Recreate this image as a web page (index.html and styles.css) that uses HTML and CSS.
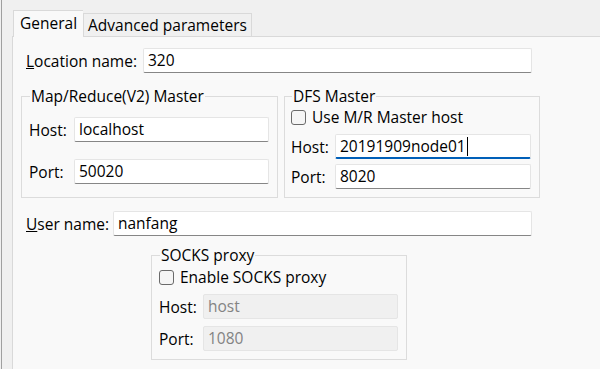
FILE: index.html
```html
<!DOCTYPE html>
<html lang="en">
<head>
    <meta charset="UTF-8">
    <title>Hadoop location</title>
    <link rel="stylesheet" href="styles.css">
</head>
<body>
    <div class="window">
        <div class="edge"></div>
        <div class="main">
            <!-- Tabs -->
            <div class="tabs">
                <div class="tab active">General</div>
                <div class="tab">Advanced parameters</div>
            </div>

            <div class="pane">
                <div class="row location-row">
                    <label class="row-label"><u>L</u>ocation name:</label>
                    <div class="field">320</div>
                </div>

                <div class="groups">
                    <fieldset class="group mr-group">
                        <legend>Map/Reduce(V2) Master</legend>
                        <div class="grid">
                            <label>Host:</label>
                            <div class="field">localhost</div>
                            <label>Port:</label>
                            <div class="field">50020</div>
                        </div>
                    </fieldset>

                    <fieldset class="group dfs-group">
                        <legend>DFS Master</legend>
                        <div class="check">
                            <span class="box"></span>
                            Use M/R Master host
                        </div>
                        <div class="grid tight">
                            <label>Host:</label>
                            <div class="field focused">20191909node01<span class="caret"></span></div>
                            <label>Port:</label>
                            <div class="field">8020</div>
                        </div>
                    </fieldset>
                </div>

                <div class="row user-row">
                    <label class="row-label"><u>U</u>ser name:</label>
                    <div class="field">nanfang</div>
                </div>

                <fieldset class="group socks-group">
                    <legend>SOCKS proxy</legend>
                    <div class="check">
                        <span class="box"></span>
                        Enable SOCKS proxy
                    </div>
                    <div class="grid tight">
                        <label>Host:</label>
                        <div class="field disabled">host</div>
                        <label>Port:</label>
                        <div class="field disabled">1080</div>
                    </div>
                </fieldset>
            </div>
        </div>
    </div>
</body>
</html>
```

FILE: styles.css
```css
* {
    margin: 0;
    padding: 0;
    box-sizing: border-box;
}

body {
    font-family: "Open Sans", "Noto Sans", sans-serif;
    font-size: 15.5px;
    color: #000;
    background-color: #f0f0f0;
    width: 600px;
    height: 369px;
    overflow: hidden;
}

.window {
    display: flex;
    height: 369px;
}

.edge {
    width: 2px;
    border-left: 1px solid #f0f0f0;
    background-color: #a0a0a0;
}

.main {
    flex: 1;
    display: flex;
    flex-direction: column;
    padding-left: 10px;
}

/* Tabs */
.tabs {
    display: flex;
    align-items: flex-end;
    height: 36px;
    padding-left: 1px;
}

.tab {
    height: 24px;
    padding: 0 4px 0 4px;
    border: 1px solid #d9d9d9;
    border-bottom: none;
    background-color: #f0f0f0;
    line-height: 22px;
    margin-bottom: -1px;
}

.tab.active {
    height: 27px;
    padding: 0 6px;
    background-color: #f9f9f9;
    border-right: none;
    position: relative;
    z-index: 1;
    line-height: 24px;
}

.pane {
    flex: 1;
    background-color: #f9f9f9;
    border-top: 1px solid #d9d9d9;
    border-left: 1px solid #d9d9d9;
    padding: 11px 0 0 8px;
}

/* Rows */
.row {
    display: flex;
    align-items: center;
    padding-left: 5px;
}

.row-label {
    flex: none;
}

.location-row .row-label {
    width: 117px;
}

.location-row .field {
    width: 389px;
}

.user-row {
    margin-top: 13px;
}

.user-row .row-label {
    width: 87px;
}

.user-row .field {
    width: 419px;
}

/* Text fields */
.field {
    height: 25px;
    padding-left: 4px;
    line-height: 23px;
    background-color: #fff;
    border: 1px solid #e5e5e5;
    border-bottom-color: #868686;
    border-radius: 2px;
    white-space: nowrap;
}

.field.focused {
    border-bottom: 2px solid #005fb8;
}

.field.disabled {
    background-color: #f0f0f0;
    border-bottom-color: #e5e5e5;
    color: #838383;
}

.caret {
    display: inline-block;
    width: 1px;
    height: 19px;
    margin-left: 1px;
    vertical-align: -4px;
    background-color: #000;
}

/* Group boxes */
.groups {
    display: flex;
    gap: 6px;
    margin-top: 12px;
}

.group {
    border: 1px solid #dcdcdc;
    border-radius: 0;
    padding: 0 8px 0 7px;
}

.group legend {
    padding: 0 1px;
    margin-left: 1px;
}

.mr-group {
    width: 257px;
    height: 113px;
    padding-top: 10px;
}

.dfs-group {
    width: 256px;
    height: 113px;
    padding-left: 6px;
}

.grid {
    display: grid;
    grid-template-columns: 45px 1fr;
    row-gap: 17px;
    align-items: center;
}

.grid.tight {
    grid-template-columns: 44px 1fr;
    row-gap: 5px;
    margin-top: 7px;
}

.socks-group {
    width: 256px;
    height: 116px;
    margin: 8px 0 0 130px;
}

.socks-group .check {
    margin-top: 1px;
}

.socks-group .grid.tight {
    row-gap: 7px;
    margin-top: 7px;
}

/* Checkbox */
.check {
    display: flex;
    align-items: center;
    gap: 6px;
    height: 20px;
}

.box {
    width: 15px;
    height: 15px;
    border: 1px solid #6a6a6a;
    border-radius: 3px;
    background-color: #f5f5f5;
}
```
